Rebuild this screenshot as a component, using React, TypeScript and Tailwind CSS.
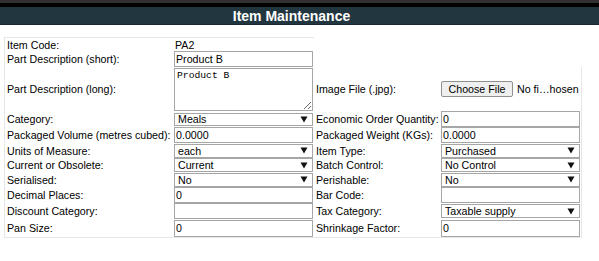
import React from "react";

const B = "border-[#a6a6a6]";
const font = { fontFamily: '"Liberation Sans", Arial, sans-serif' };

function Arrow() {
  return (
    <svg width="8" height="7" viewBox="0 0 8 7" className="shrink-0">
      <path d="M0.5 0.5 H7.5 L4 6.5 Z" fill="#111" />
    </svg>
  );
}

function TextBox({ value, h = 16 }: { value?: string; h?: number }) {
  return (
    <div
      className={`w-[139px] border ${B} bg-white pl-[1px] flex items-center text-black`}
      style={{ height: h }}
    >
      {value}
    </div>
  );
}

function Select({ value, h = 14 }: { value: string; h?: number }) {
  return (
    <div
      className={`w-[139px] border ${B} bg-white pl-[3px] pr-[4px] flex items-center justify-between text-black`}
      style={{ height: h }}
    >
      <span>{value}</span>
      <Arrow />
    </div>
  );
}

type Row = { h: number; label?: string; ctl?: React.ReactNode };

const left: Row[] = [
  { h: 13, label: "Item Code:", ctl: <span className="pl-[1px]">PA2</span> },
  { h: 16, label: "Part Description (short):", ctl: <TextBox value="Product B" /> },
  {
    h: 44,
    label: "Part Description (long):",
    ctl: (
      <textarea
        readOnly
        defaultValue="Product B"
        className={`block w-[139px] h-[43px] border ${B} bg-white px-[2px] pt-[1px] text-black outline-none resize`}
        style={{ fontFamily: '"Liberation Mono", monospace', fontSize: "9.7px", lineHeight: "12px" }}
      />
    ),
  },
  { h: 16, label: "Category:", ctl: <Select value="Meals" h={13} /> },
  { h: 16, label: "Packaged Volume (metres cubed):", ctl: <TextBox value="0.0000" /> },
  { h: 15, label: "Units of Measure:", ctl: <Select value="each" /> },
  { h: 14, label: "Current or Obsolete:", ctl: <Select value="Current" /> },
  { h: 15, label: "Serialised:", ctl: <Select value="No" /> },
  { h: 16, label: "Decimal Places:", ctl: <TextBox value="0" /> },
  { h: 16, label: "Discount Category:", ctl: <TextBox value="" /> },
  { h: 18, label: "Pan Size:", ctl: <TextBox value="0" h={17} /> },
];

const right: Row[] = [
  {
    h: 44,
    label: "Image File (.jpg):",
    ctl: (
      <div className="flex items-center w-[139px]">
        <div className="h-[16px] w-[72px] border border-[#8f8f8f] rounded-[2px] bg-[#efefef] flex items-center justify-center text-black">
          Choose File
        </div>
        <span className="ml-[4px] text-black whitespace-nowrap">No fi…hosen</span>
      </div>
    ),
  },
  { h: 16, label: "Economic Order Quantity:", ctl: <TextBox value="0" /> },
  { h: 16, label: "Packaged Weight (KGs):", ctl: <TextBox value="0.0000" /> },
  { h: 15, label: "Item Type:", ctl: <Select value="Purchased" /> },
  { h: 14, label: "Batch Control:", ctl: <Select value="No Control" /> },
  { h: 15, label: "Perishable:", ctl: <Select value="No" /> },
  { h: 16, label: "Bar Code:", ctl: <TextBox value="" /> },
  { h: 16, label: "Tax Category:", ctl: <Select value="Taxable supply" /> },
  { h: 18, label: "Shrinkage Factor:", ctl: <TextBox value="0" h={17} /> },
];

function Rows({ rows, labelW }: { rows: Row[]; labelW: number }) {
  return (
    <div className="flex flex-col">
      {rows.map((r, i) => (
        <div key={i} className="flex items-center" style={{ height: r.h }}>
          <div className="pl-[2px] whitespace-nowrap text-black" style={{ width: labelW }}>
            {r.label}
          </div>
          <div className="w-[139px] flex items-center">{r.ctl}</div>
        </div>
      ))}
    </div>
  );
}

export default function App() {
  return (
    <div className="w-[599px] h-[261px] bg-white overflow-hidden text-[10.67px] leading-[12px]" style={font}>
      <div className="h-[3px] bg-[#313131]" />
      <div className="h-[4px] bg-black" />
      <div className="h-[18px] bg-[#22363f] border-b border-[#182830] pr-[16px] flex items-center justify-center">
        <span className="text-white font-bold text-[14px] leading-[16px]">Item Maintenance</span>
      </div>
      <div className="mt-[12px] ml-[4px] flex items-end">
        <div className="w-[310px] border-l border-t border-b border-[#e6e6e6]">
          <Rows rows={left} labelW={169} />
        </div>
        <div className="w-[268px] border-r border-b border-[#e6e6e6] pr-[1px]">
          <Rows rows={right} labelW={127} />
        </div>
      </div>
    </div>
  );
}
